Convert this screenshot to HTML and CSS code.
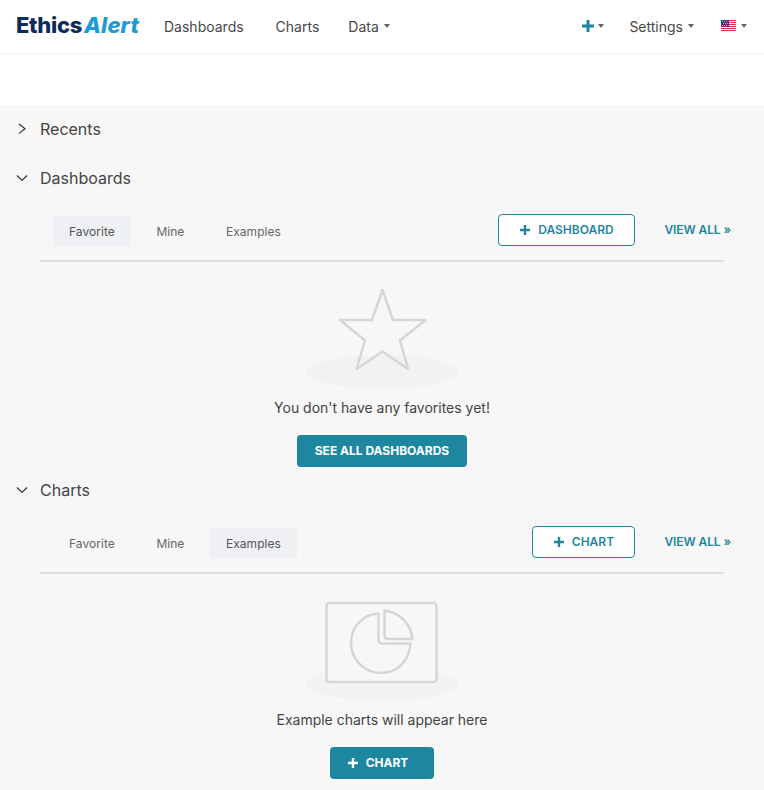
FILE: index.html
```html
<!DOCTYPE html>
<html lang="en">
  <head>
    <meta charset="UTF-8" />
    <meta name="viewport" content="width=device-width, initial-scale=1.0" />
    <title>EthicsAlert</title>
    <link rel="stylesheet" href="styles.css">
  </head>

  <body>
    <header class="navbar">
      <a class="logo" href="#"><span class="logo-dark">Ethics</span><span class="logo-light">Alert</span></a>
      <nav class="menu">
        <a class="menu-item menu-dashboards" href="#">Dashboards</a>
        <a class="menu-item menu-charts" href="#">Charts</a>
        <a class="menu-item menu-data" href="#">Data<i class="caret"></i></a>
      </nav>
      <div class="menu-right">
        <a class="menu-item menu-plus" href="#">
          <svg class="nav-plus" width="12" height="12" viewBox="0 0 12 12"><path d="M4.5 0h3v4.500H12v3H7.500V12h-3V7.500H0v-3h4.500z" /></svg><i class="caret"></i>
        </a>
        <a class="menu-item" href="#">Settings<i class="caret"></i></a>
        <a class="menu-item menu-flag" href="#">
          <svg class="flag" width="15" height="12" viewBox="0 0 15 12">
            <rect width="15" height="12" fill="#f4f4f4" />
            <path d="M0 0h15v1H0zM0 2h15v1H0zM0 4h15v1H0zM0 6h15v1H0zM0 8h15v1H0zM0 10h15v1H0z" fill="#d8334a" />
            <rect width="8" height="6.500" fill="#3c3b7a" />
            <path d="M1 1h1v1H1zM3 1h1v1H3zM5 1h1v1H5zM2 3h1v1H2zM4 3h1v1H4zM6 3h1v1H6zM1 5h1v1H1zM3 5h1v1H3zM5 5h1v1H5z" fill="#a9a9cc" />
          </svg><i class="caret"></i>
        </a>
      </div>
    </header>
    <div class="subbar"></div>

    <main class="home">
      <div class="panel-header panel-recents">
        <svg class="chevron" width="12" height="12" viewBox="0 0 12 12"><path d="M3 1l6 4.800-6 4.800" /></svg>
        <span>Recents</span>
      </div>

      <section class="panel">
        <div class="panel-header">
          <svg class="chevron" width="12" height="12" viewBox="0 0 12 12"><path d="M1 3.500l5 5 5-5" /></svg>
          <span>Dashboards</span>
        </div>
        <div class="tabs-row">
          <div class="tabs">
            <a class="tab active" href="#">Favorite</a>
            <a class="tab" href="#">Mine</a>
            <a class="tab" href="#">Examples</a>
          </div>
          <div class="tab-actions">
            <a class="btn-outline btn-dashboard" href="#"><svg class="btn-plus" width="10" height="10" viewBox="0 0 10 10"><path d="M3.800 0h2.400v3.800H10v2.400H6.200V10H3.800V6.200H0V3.800h3.800z" /></svg>Dashboard</a>
            <a class="view-all" href="#">View all »</a>
          </div>
        </div>
        <div class="empty">
          <svg class="empty-art" width="152" height="100" viewBox="0 0 152 100">
            <ellipse class="art-shadow" cx="76" cy="83" rx="76" ry="17" />
            <path class="art-line" d="M76.500 1L66 31H34L59 51.500 50.500 80 76.500 62.500 102 80 94 51.500 119.500 31H87z" />
          </svg>
          <p class="empty-text">You don't have any favorites yet!</p>
          <a class="btn-solid btn-see-all" href="#">See all dashboards</a>
        </div>
      </section>

      <section class="panel">
        <div class="panel-header">
          <svg class="chevron" width="12" height="12" viewBox="0 0 12 12"><path d="M1 3.500l5 5 5-5" /></svg>
          <span>Charts</span>
        </div>
        <div class="tabs-row">
          <div class="tabs">
            <a class="tab" href="#">Favorite</a>
            <a class="tab" href="#">Mine</a>
            <a class="tab active" href="#">Examples</a>
          </div>
          <div class="tab-actions">
            <a class="btn-outline btn-chart" href="#"><svg class="btn-plus" width="10" height="10" viewBox="0 0 10 10"><path d="M3.800 0h2.400v3.800H10v2.400H6.200V10H3.800V6.200H0V3.800h3.800z" /></svg>Chart</a>
            <a class="view-all" href="#">View all »</a>
          </div>
        </div>
        <div class="empty">
          <svg class="empty-art" width="152" height="100" viewBox="0 0 152 100">
            <ellipse class="art-shadow" cx="76" cy="83" rx="76" ry="17" />
            <rect class="art-fill" x="20.500" y="2" width="110" height="79" rx="3" />
            <path class="art-line" d="M72.500 12.500C56 13.500 45 27 45 42c0 16.500 13.500 30 30 30 15.500 0 28-11 29.500-29.500H76c-2 0-3.500-1.500-3.500-3.500z" />
            <path class="art-line" d="M78.500 9.500V35c0 2 1 3 3 3h25c-1.500-15-13-27-28-28.500z" />
          </svg>
          <p class="empty-text">Example charts will appear here</p>
          <a class="btn-solid btn-add-chart" href="#"><svg class="btn-plus" width="10" height="10" viewBox="0 0 10 10"><path d="M3.800 0h2.400v3.800H10v2.400H6.200V10H3.800V6.200H0V3.800h3.800z" /></svg>Chart</a>
        </div>
      </section>
    </main>
  </body>
</html>
```

FILE: styles.css
```css
* {
  box-sizing: border-box;
}

html,
body {
  height: 790px;
  overflow: hidden;
}

body {
  margin: 0;
  font-family: "Inter", "Liberation Sans", sans-serif;
  font-size: 14px;
  color: #444;
  background-color: #fff;
}

a {
  color: inherit;
  text-decoration: none;
}

.navbar {
  height: 55px;
  display: flex;
  align-items: center;
  padding: 0 16px 1px;
  border-bottom: 2px solid #f5f5f5;
  background-color: #fff;
}

.logo {
  width: 148px;
  margin-bottom: 2px;
  font-size: 22px;
  font-weight: 800;
  letter-spacing: -0.3px;
  white-space: nowrap;
}

.logo-dark {
  color: #0f2a5c;
}

.logo-light {
  margin-left: 2px;
  letter-spacing: 0.1px;
  color: #1f9ad6;
  font-style: italic;
}

.menu,
.menu-right {
  display: flex;
  align-items: center;
}

.menu-right {
  margin-left: auto;
  margin-right: 1px;
  gap: 25px;
}

.menu-item {
  display: flex;
  align-items: center;
  color: #484848;
}

.menu-dashboards {
  margin-right: 32px;
}

.menu-charts {
  margin-right: 28px;
}

.menu-data {
  margin-left: 1px;
}

.menu-flag {
  margin-left: 2px;
}

.caret {
  width: 0;
  height: 0;
  margin-left: 5px;
  border-left: 3px solid transparent;
  border-right: 3px solid transparent;
  border-top: 4px solid #666;
}

.menu-plus .caret {
  margin-left: 4px;
}

.nav-plus {
  fill: #1f86a0;
}

.subbar {
  height: 50px;
  background-color: #fff;
}

.home {
  height: 685px;
  padding-top: 1px;
  background-color: #f7f7f7;
}

.panel-header {
  height: 46px;
  display: flex;
  align-items: center;
  padding-left: 16px;
  margin-bottom: 13px;
  font-size: 16px;
  color: #444;
}

.panel-header span {
  margin-left: 12px;
}

.panel-recents {
  margin-bottom: 3px;
}

.chevron {
  fill: none;
  stroke: #333;
  stroke-width: 1.2;
}

.tabs-row {
  height: 48px;
  display: flex;
  justify-content: space-between;
  margin: 0 40px;
  padding-left: 13px;
  border-bottom: 2px solid #e0e0e0;
}

.tabs {
  display: flex;
  align-items: flex-start;
  gap: 9.5px;
  padding-top: 2px;
}

.tab {
  height: 31px;
  display: flex;
  align-items: center;
  padding: 0 16px;
  border-radius: 4px;
  font-size: 12px;
  letter-spacing: 0.05px;
  color: #666;
}

.tab.active {
  background-color: #eef0f4;
  color: #555;
}

.tab-actions {
  display: flex;
  align-items: flex-start;
  gap: 29px;
  margin-right: -7px;
}

.btn-outline {
  height: 32px;
  display: flex;
  align-items: center;
  justify-content: center;
  padding-bottom: 1px;
  border: 1px solid #1f86a0;
  border-radius: 4px;
  background-color: #fff;
  color: #1f86a0;
  font-size: 12px;
  font-weight: 600;
  text-transform: uppercase;
}

.btn-dashboard {
  width: 137px;
}

.btn-chart {
  width: 103px;
}

.btn-plus {
  margin-right: 8px;
  fill: currentColor;
}

.view-all {
  line-height: 31px;
  color: #1f86a0;
  font-size: 12px;
  font-weight: 600;
  letter-spacing: -0.1px;
  text-transform: uppercase;
}

.empty {
  display: flex;
  flex-direction: column;
  align-items: center;
  padding-top: 27px;
}

.empty-art {
  display: block;
}

.art-shadow {
  fill: #f2f2f2;
}

.art-line,
.art-fill {
  fill: none;
  stroke: #d6d6d6;
  stroke-width: 2.5;
  stroke-linejoin: round;
}

.art-fill {
  fill: #f7f7f7;
}

.empty-text {
  margin: 9px 0 17px;
  line-height: 20px;
  font-size: 14px;
  letter-spacing: -0.01px;
  color: #444;
}

.btn-solid {
  height: 32px;
  display: flex;
  align-items: center;
  justify-content: center;
  padding-bottom: 1px;
  border-radius: 4px;
  background-color: #1f86a0;
  color: #fff;
  font-size: 12px;
  font-weight: 700;
  text-transform: uppercase;
}

.btn-see-all {
  width: 170px;
}

.btn-add-chart {
  width: 104px;
  padding-right: 8px;
}
```
